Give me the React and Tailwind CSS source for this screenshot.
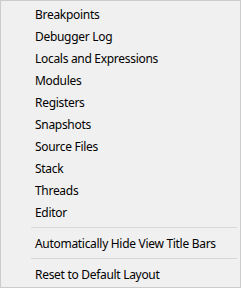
const views = [
  "Breakpoints",
  "Debugger Log",
  "Locals and Expressions",
  "Modules",
  "Registers",
  "Snapshots",
  "Source Files",
  "Stack",
  "Threads",
  "Editor",
];

function Item({ label }) {
  return (
    <div className="flex h-[22px] items-center pl-[34px] text-[12px] tracking-[-0.3px] text-black">
      {label}
    </div>
  );
}

function Separator() {
  return <div className="mt-[3px] mb-[5px] ml-[30px] mr-[3px] h-px bg-[#d7d7d7]" />;
}

export default function App() {
  return (
    <div className="flex h-[288px] w-[241px] flex-col border border-[#cccccc] bg-[#f0f0f0] pt-[3px] font-['Noto_Sans','Open_Sans',sans-serif]">
      {views.map((v) => (
        <Item key={v} label={v} />
      ))}
      <Separator />
      <Item label="Automatically Hide View Title Bars" />
      <Separator />
      <Item label="Reset to Default Layout" />
    </div>
  );
}
